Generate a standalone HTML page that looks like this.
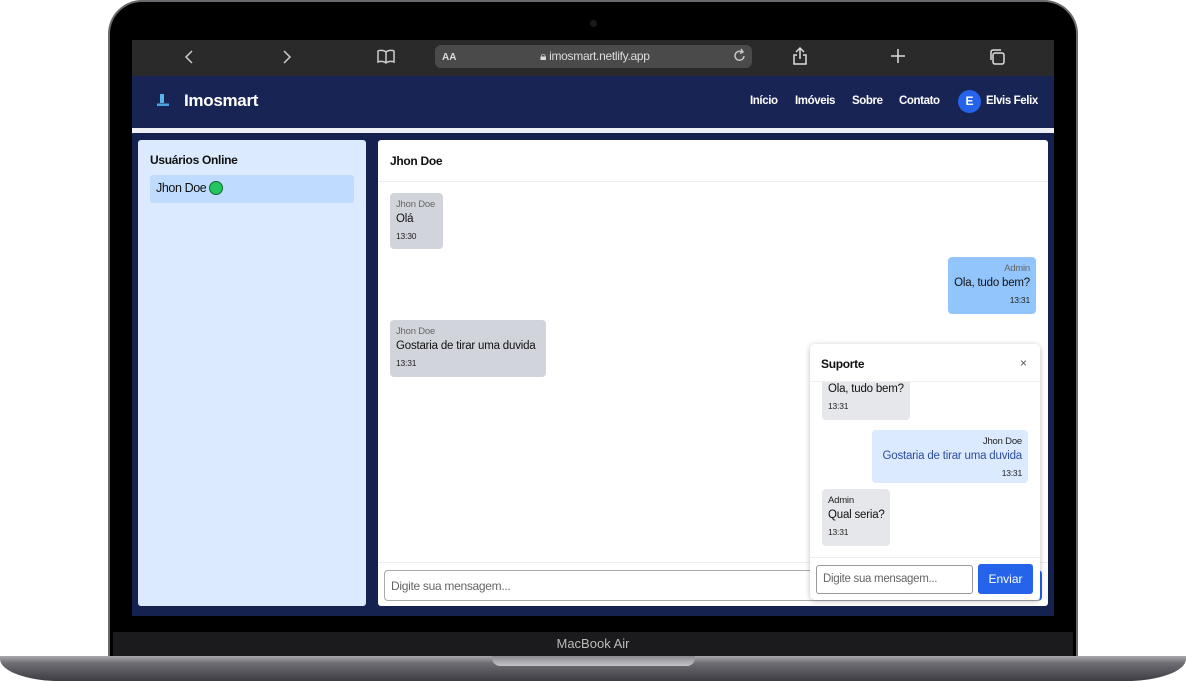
<!DOCTYPE html>
<html><head><meta charset="utf-8"><style>
*{box-sizing:border-box;margin:0;padding:0}
body{width:1186px;height:681px;background:#fff;position:relative;overflow:hidden;font-family:"Liberation Sans",sans-serif}
.a{position:absolute;white-space:nowrap}
.lid{left:108px;top:0;width:970px;height:660px;background:#000;border-radius:34px 34px 0 0;border:2px solid #6a6a6e;border-bottom:none}
.bub{position:absolute;border-radius:4px;padding:6px 6px;font-size:11.5px;color:#111;white-space:nowrap;letter-spacing:-0.2px;line-height:1.2}
.n{font-size:9.5px;color:#666}
.t{font-size:8.5px;color:#222;margin-top:4px}
.m{margin-top:3px}
</style></head><body>
<div class="a lid"></div>
<div class="a" style="left:590px;top:20px;width:7px;height:7px;border-radius:50%;background:#1a1a1a"></div>
<div class="a" style="left:132px;top:40px;width:922px;height:576px;background:#15214f"></div>
<div class="a" style="left:132px;top:40px;width:922px;height:36px;background:#2a2a2a;color:#ddd"></div>
<svg class="a" style="left:184px;top:49px" width="10" height="16" viewBox="0 0 10 16"><path d="M8 2L2 8l6 6" stroke="#ccc" stroke-width="1.5" fill="none"/></svg>
<svg class="a" style="left:282px;top:49px" width="10" height="16" viewBox="0 0 10 16"><path d="M2 2l6 6-6 6" stroke="#ccc" stroke-width="1.5" fill="none"/></svg>
<svg class="a" style="left:376px;top:49px" width="20" height="16" viewBox="0 0 20 16"><path d="M10 3v11M10 3C8 1 4 1 2 2v11c2-1 6-1 8 1c2-2 6-2 8-1V2c-2-1-6-1-8 1" stroke="#ccc" stroke-width="1.5" fill="none"/></svg>
<div class="a" style="left:435px;top:45px;width:317px;height:23px;background:#4a4a4a;border-radius:6px"></div>
<div class="a" style="left:442px;top:52px;color:#ddd;font-size:10px;font-weight:bold">AA</div>
<div class="a" style="left:540px;top:49px;color:#ddd;font-size:12px;letter-spacing:-0.3px">&#128274;&#xFE0E; imosmart.netlify.app</div>
<svg class="a" style="left:733px;top:48px" width="14" height="15" viewBox="0 0 14 15"><path d="M11 8a4.5 4.5 0 1 1-2-4M8 1l2 3-3 1.5" stroke="#ccc" stroke-width="1.4" fill="none"/></svg>
<svg class="a" style="left:792px;top:46px" width="16" height="20" viewBox="0 0 16 20"><path d="M8 2v11M4 6l4-4 4 4M5 9H2v9h12V9h-3" stroke="#ddd" stroke-width="1.5" fill="none"/></svg>
<svg class="a" style="left:891px;top:49px" width="14" height="14" viewBox="0 0 14 14"><path d="M7 0v14M0 7h14" stroke="#ddd" stroke-width="1.5"/></svg>
<svg class="a" style="left:988px;top:48px" width="18" height="18" viewBox="0 0 18 18"><rect x="5" y="5" width="11" height="11" rx="2" stroke="#ddd" stroke-width="1.5" fill="none"/><path d="M3 12V4a2 2 0 0 1 2-2h8" stroke="#ddd" stroke-width="1.5" fill="none"/></svg>
<div class="a" style="left:132px;top:76px;width:922px;height:52px;background:#182454"></div>
<div class="a" style="left:157px;top:96px;width:12px;height:10px;background:linear-gradient(180deg,transparent 75%,#4aa3df 75%)"></div>
<div class="a" style="left:160px;top:94px;width:4px;height:9px;background:#5ab4ea"></div>
<div class="a" style="left:184px;top:91px;color:#fff;font-size:17px;font-weight:bold;letter-spacing:-0.3px">Imosmart</div>
<div class="a" style="left:750px;top:95px;color:#fff;font-size:11.5px;font-weight:bold;letter-spacing:-0.4px">Início</div>
<div class="a" style="left:795px;top:95px;color:#fff;font-size:11.5px;font-weight:bold;letter-spacing:-0.4px">Imóveis</div>
<div class="a" style="left:852px;top:95px;color:#fff;font-size:11.5px;font-weight:bold;letter-spacing:-0.4px">Sobre</div>
<div class="a" style="left:899px;top:95px;color:#fff;font-size:11.5px;font-weight:bold;letter-spacing:-0.4px">Contato</div>
<div class="a" style="left:958px;top:90px;width:23px;height:23px;border-radius:50%;background:#2563eb;color:#fff;font-size:12px;font-weight:bold;text-align:center;line-height:23px">E</div>
<div class="a" style="left:986px;top:95px;color:#fff;font-size:11.5px;font-weight:bold;letter-spacing:-0.4px">Elvis Felix</div>
<div class="a" style="left:132px;top:128px;width:922px;height:5px;background:#eef0f5"></div>
<div class="a" style="left:138px;top:140px;width:228px;height:466px;background:#dbeafe;border-radius:3px"></div>
<div class="a" style="left:150px;top:153px;font-size:12px;font-weight:bold;color:#111;letter-spacing:-0.3px">Usuários Online</div>
<div class="a" style="left:150px;top:175px;width:204px;height:28px;background:#bfdbfe;border-radius:3px"></div>
<div class="a" style="left:156px;top:181px;font-size:12.5px;color:#111;letter-spacing:-0.4px">Jhon Doe</div>
<div class="a" style="left:209px;top:181px;width:14px;height:14px;border-radius:50%;background:#22c55e;border:1px solid #166534"></div>
<div class="a" style="left:378px;top:140px;width:670px;height:466px;background:#fff;border-radius:3px"></div>
<div class="a" style="left:378px;top:181px;width:670px;height:1px;background:#eee"></div>
<div class="a" style="left:390px;top:154px;font-size:12px;font-weight:bold;color:#111;letter-spacing:-0.3px">Jhon Doe</div>
<div class="bub" style="left:390px;top:193px;width:53px;height:56px;background:#d1d5db"><div class="n">Jhon Doe</div><div class="m">Olá</div><div class="t">13:30</div></div>
<div class="bub" style="left:948px;top:257px;width:88px;height:57px;background:#93c5fd;text-align:right"><div class="n">Admin</div><div class="m">Ola, tudo bem?</div><div class="t">13:31</div></div>
<div class="bub" style="left:390px;top:320px;width:156px;height:57px;background:#d1d5db"><div class="n">Jhon Doe</div><div class="m">Gostaria de tirar uma duvida</div><div class="t">13:31</div></div>
<div class="a" style="left:378px;top:562px;width:670px;height:1px;background:#eee"></div>
<div class="a" style="left:384px;top:570px;width:658px;height:31px;border:1px solid #aaa;border-radius:4px;border-right:2px solid #2563eb"></div>
<div class="a" style="left:391px;top:579px;font-size:12px;color:#666;letter-spacing:-0.3px">Digite sua mensagem...</div>
<div class="a" style="left:810px;top:344px;width:230px;height:256px;background:#fff;border-radius:5px;box-shadow:0 1px 6px rgba(0,0,0,.25);overflow:hidden">
<div class="bub" style="left:12px;top:28px;width:88px;height:48px;background:#e5e7eb;padding-top:11px"><div>Ola, tudo bem?</div><div class="t">13:31</div></div>
<div class="a" style="left:0;top:0;width:230px;height:38px;background:#fff;border-bottom:1px solid #f0f0f0"></div>
<div class="a" style="left:11px;top:13px;font-size:12px;font-weight:bold;color:#111;letter-spacing:-0.3px">Suporte</div>
<div class="a" style="left:210px;top:12px;font-size:12px;color:#555">×</div>
<div class="bub" style="left:62px;top:86px;width:156px;height:53px;background:#dbeafe;text-align:right"><div class="n" style="color:#222">Jhon Doe</div><div class="m" style="color:#2d4ea0">Gostaria de tirar uma duvida</div><div class="t">13:31</div></div>
<div class="bub" style="left:12px;top:145px;width:68px;height:57px;background:#e5e7eb"><div class="n" style="color:#222">Admin</div><div class="m">Qual seria?</div><div class="t">13:31</div></div>
<div class="a" style="left:0;top:213px;width:230px;height:1px;background:#eee"></div>
<div class="a" style="left:6px;top:221px;width:157px;height:29px;border:1px solid #999;border-radius:3px;font-size:11.5px;color:#666;padding:7px 6px;letter-spacing:-0.3px">Digite sua mensagem...</div>
<div class="a" style="left:168px;top:220px;width:55px;height:30px;background:#2563eb;border-radius:3px;color:#fff;font-size:12px;text-align:center;line-height:30px">Enviar</div>
</div>
<div class="a" style="left:113px;top:632px;width:960px;height:26px;background:#1b1b1d"></div>
<div class="a" style="left:0;top:636px;width:1186px;text-align:center;color:#bbb;font-size:13px">MacBook Air</div>
<div class="a" style="left:0;top:656px;width:1186px;height:25px;background:linear-gradient(#a9a9ae,#6c6c72 30%,#3c3c42);border-radius:0 0 60px 60px/0 0 22px 22px"></div>
<div class="a" style="left:492px;top:656px;width:203px;height:10px;background:linear-gradient(#8a8a90,#c4c4c8);border-radius:0 0 8px 8px"></div>
</body></html>
